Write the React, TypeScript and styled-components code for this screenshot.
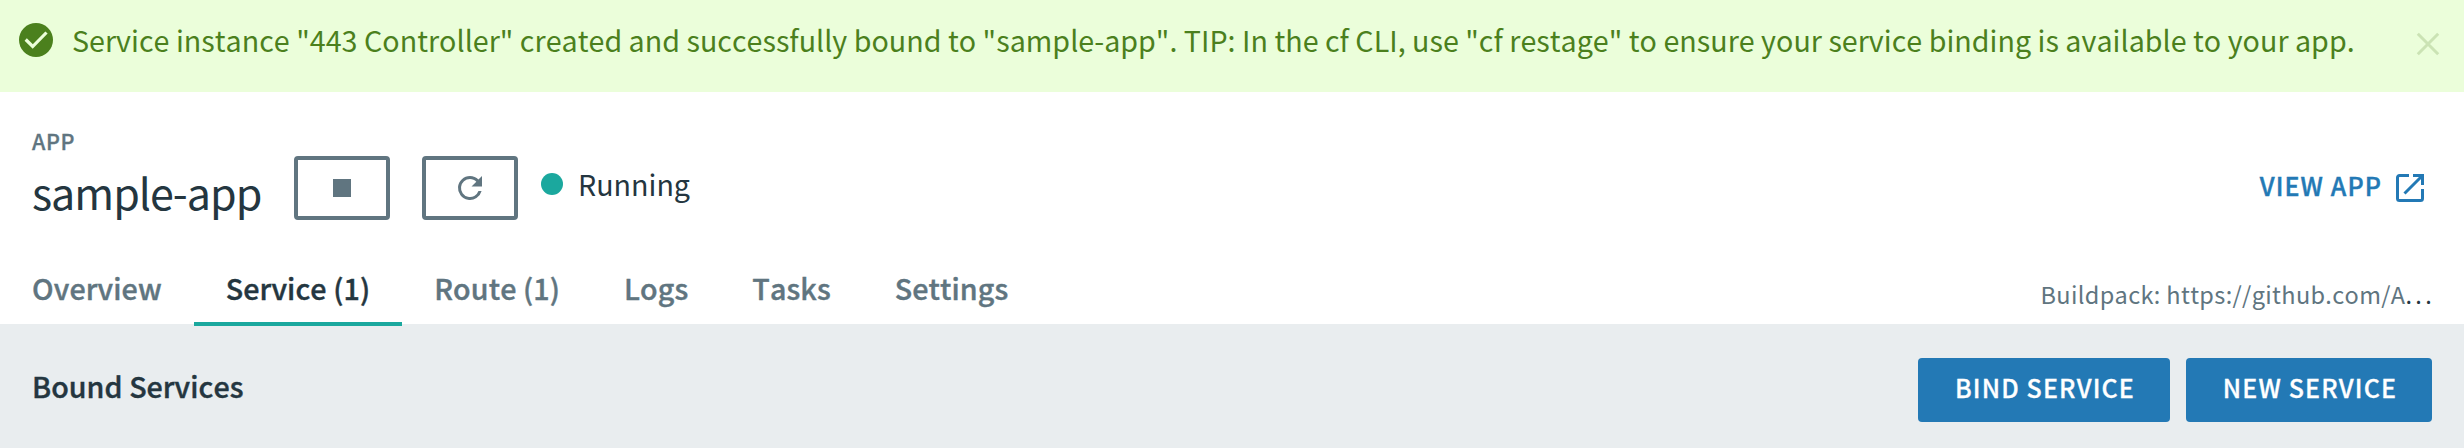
import React from "react";
import styled, { createGlobalStyle } from "styled-components";

const Global = createGlobalStyle`
  * { box-sizing: border-box; }
  body { margin: 0; background: #fff; color: #243640; font-family: "Noto Sans CJK JP", "Noto Sans", sans-serif; font-size: 28.65px; font-kerning: none; }
  button { font: inherit; font-kerning: none; cursor: pointer; }
`;

const Page = styled.div`
  width: 2464px;
  height: 448px;
  display: flex;
  flex-direction: column;
  overflow: hidden;
  white-space: nowrap;
`;

const Alert = styled.div`
  height: 92px;
  padding: 0 23px 12px 19px;
  display: flex;
  align-items: center;
  background: #ebfeda;
  color: #4b801d;
`;

const AlertText = styled.span`
  flex: 1;
  margin-left: 19px;
  padding-bottom: 2px;
  letter-spacing: 0.024px;
`;

const IconSvg = styled.svg<{ $size: number }>`
  width: ${(p) => p.$size}px;
  height: ${(p) => p.$size}px;
  flex: none;
  display: block;
`;

const CloseButton = styled.button`
  padding: 8px 0 0;
  border: 0;
  background: none;
  color: #cbe3b4;
`;

const Header = styled.header`
  height: 232px;
  padding: 34px 32px 0;
  display: flex;
  flex-direction: column;
`;

const Eyebrow = styled.div`
  flex: none;
  height: 30px;
  line-height: 29px;
  font-size: 21.5px;
  font-weight: 500;
  letter-spacing: 0.6px;
  -webkit-text-stroke: 0.3px currentColor;
  color: #607580;
`;

const TitleRow = styled.div`
  flex: none;
  height: 64px;
  display: flex;
`;

const Title = styled.h1`
  margin: 3px 32px 0 0;
  width: 230px;
  line-height: 64px;
  font-size: 43px;
  font-weight: 400;
  letter-spacing: -1px;
`;

const ActionButton = styled.button`
  width: 96px;
  height: 64px;
  margin-right: 32px;
  padding: 0;
  display: flex;
  align-items: center;
  justify-content: center;
  border: 4px solid #607580;
  border-radius: 4px;
  background: #fff;
  color: #607580;
`;

const StopGlyph = styled.span`
  width: 18px;
  height: 18px;
  background: currentColor;
`;

const StatusDot = styled.span`
  width: 22px;
  height: 22px;
  margin: 17px 15px 0 -9px;
  border-radius: 50%;
  background: #1ba89e;
`;

const StatusText = styled.span`
  line-height: 55px;
`;

const ViewLink = styled.a`
  margin-left: auto;
  padding-right: 8px;
  display: flex;
  align-items: center;
  gap: 14px;
  font-size: 25px;
  font-weight: 500;
  letter-spacing: 1.1px;
  -webkit-text-stroke: 0.4px currentColor;
  color: #2379b5;
`;

const ViewLabel = styled.span`
  padding-bottom: 6px;
`;

const Nav = styled.nav`
  flex: none;
  height: 70px;
  margin-top: 36px;
  display: flex;
  position: relative;
`;

const Tab = styled.a<{ $active?: boolean }>`
  height: 70px;
  padding: 0 32px;
  line-height: 63px;
  font-weight: 500;
  letter-spacing: 0.1px;
  -webkit-text-stroke: 0.4px currentColor;
  color: ${(p) => (p.$active ? "#243640" : "#607580")};
  border-bottom: 4px solid ${(p) => (p.$active ? "#1ba89e" : "transparent")};
  &:first-child { margin-left: -32px; }
`;

const Buildpack = styled.div`
  margin-left: auto;
  line-height: 76px;
  font-size: 23.5px;
  letter-spacing: 3.3px;
  margin-right: -3px;
`;

const BuildpackValue = styled.span`
  letter-spacing: 0.35px;
  color: #607580;
`;

const Section = styled.section`
  flex: 1;
  padding: 0 32px;
  display: flex;
  align-items: center;
  gap: 16px;
  background: #e9edef;
`;

const SectionTitle = styled.h2`
  margin: -1px auto 0 0;
  font-size: 28.65px;
  font-weight: 500;
  letter-spacing: 0.05px;
  -webkit-text-stroke: 0.4px currentColor;
`;

const PrimaryButton = styled.button<{ $width: number }>`
  width: ${(p) => p.$width}px;
  height: 64px;
  margin-top: 8px;
  padding: 0 0 6px 2px;
  border: 0;
  border-radius: 4px;
  background: #2379b5;
  color: #fff;
  font-size: 25px;
  font-weight: 500;
  letter-spacing: 1.15px;
  -webkit-text-stroke: 0.3px currentColor;
`;

const tabs = ["Overview", "Service (1)", "Route (1)", "Logs", "Tasks", "Settings"];

export default function App() {
  return (
    <Page>
      <Global />
      <Alert>
        <IconSvg $size={34} viewBox="0 0 34 34">
          <circle cx="17" cy="17" r="17" fill="currentColor" />
          <path d="M6.700 16.500 13.700 23.500 27.500 9.500" fill="none" stroke="#ebfeda" strokeWidth="3.2" />
        </IconSvg>
        <AlertText>
          Service instance "443 Controller" created and successfully bound to "sample-app". TIP: In the cf CLI, use "cf restage" to ensure your service binding is available to your app.
        </AlertText>
        <CloseButton aria-label="Close">
          <IconSvg $size={26} viewBox="0 0 26 26">
            <path d="M2.800 2.800 23.200 23.200M23.200 2.800 2.800 23.200" stroke="currentColor" strokeWidth="3" />
          </IconSvg>
        </CloseButton>
      </Alert>
      <Header>
        <Eyebrow>APP</Eyebrow>
        <TitleRow>
          <Title>sample-app</Title>
          <ActionButton aria-label="Stop"><StopGlyph /></ActionButton>
          <ActionButton aria-label="Restart">
            <IconSvg $size={36} viewBox="0 0 24 24">
              <path fill="currentColor" d="M17.65 6.35A7.96 7.96 0 0 0 12 4a8 8 0 1 0 7.73 10h-2.08A6 6 0 1 1 12 6c1.66 0 3.14.69 4.22 1.78L13 11h7V4z" />
            </IconSvg>
          </ActionButton>
          <StatusDot />
          <StatusText>Running</StatusText>
          <ViewLink>
            <ViewLabel>VIEW APP</ViewLabel>
            <IconSvg $size={28} viewBox="0 0 28 28">
              <path d="M13 1.5H3.5a2 2 0 0 0-2 2v21a2 2 0 0 0 2 2h21a2 2 0 0 0 2-2V15M17 1.5h9.500V11M26 2 8.500 19.500" fill="none" stroke="currentColor" strokeWidth="3" />
            </IconSvg>
          </ViewLink>
        </TitleRow>
        <Nav>
          {tabs.map((t) => (
            <Tab key={t} $active={t === "Service (1)"}>{t}</Tab>
          ))}
          <Buildpack>
            <BuildpackValue>Buildpack: https://github.com/A</BuildpackValue>...
          </Buildpack>
        </Nav>
      </Header>
      <Section>
        <SectionTitle>Bound Services</SectionTitle>
        <PrimaryButton $width={252}>BIND SERVICE</PrimaryButton>
        <PrimaryButton $width={246}>NEW SERVICE</PrimaryButton>
      </Section>
    </Page>
  );
}
